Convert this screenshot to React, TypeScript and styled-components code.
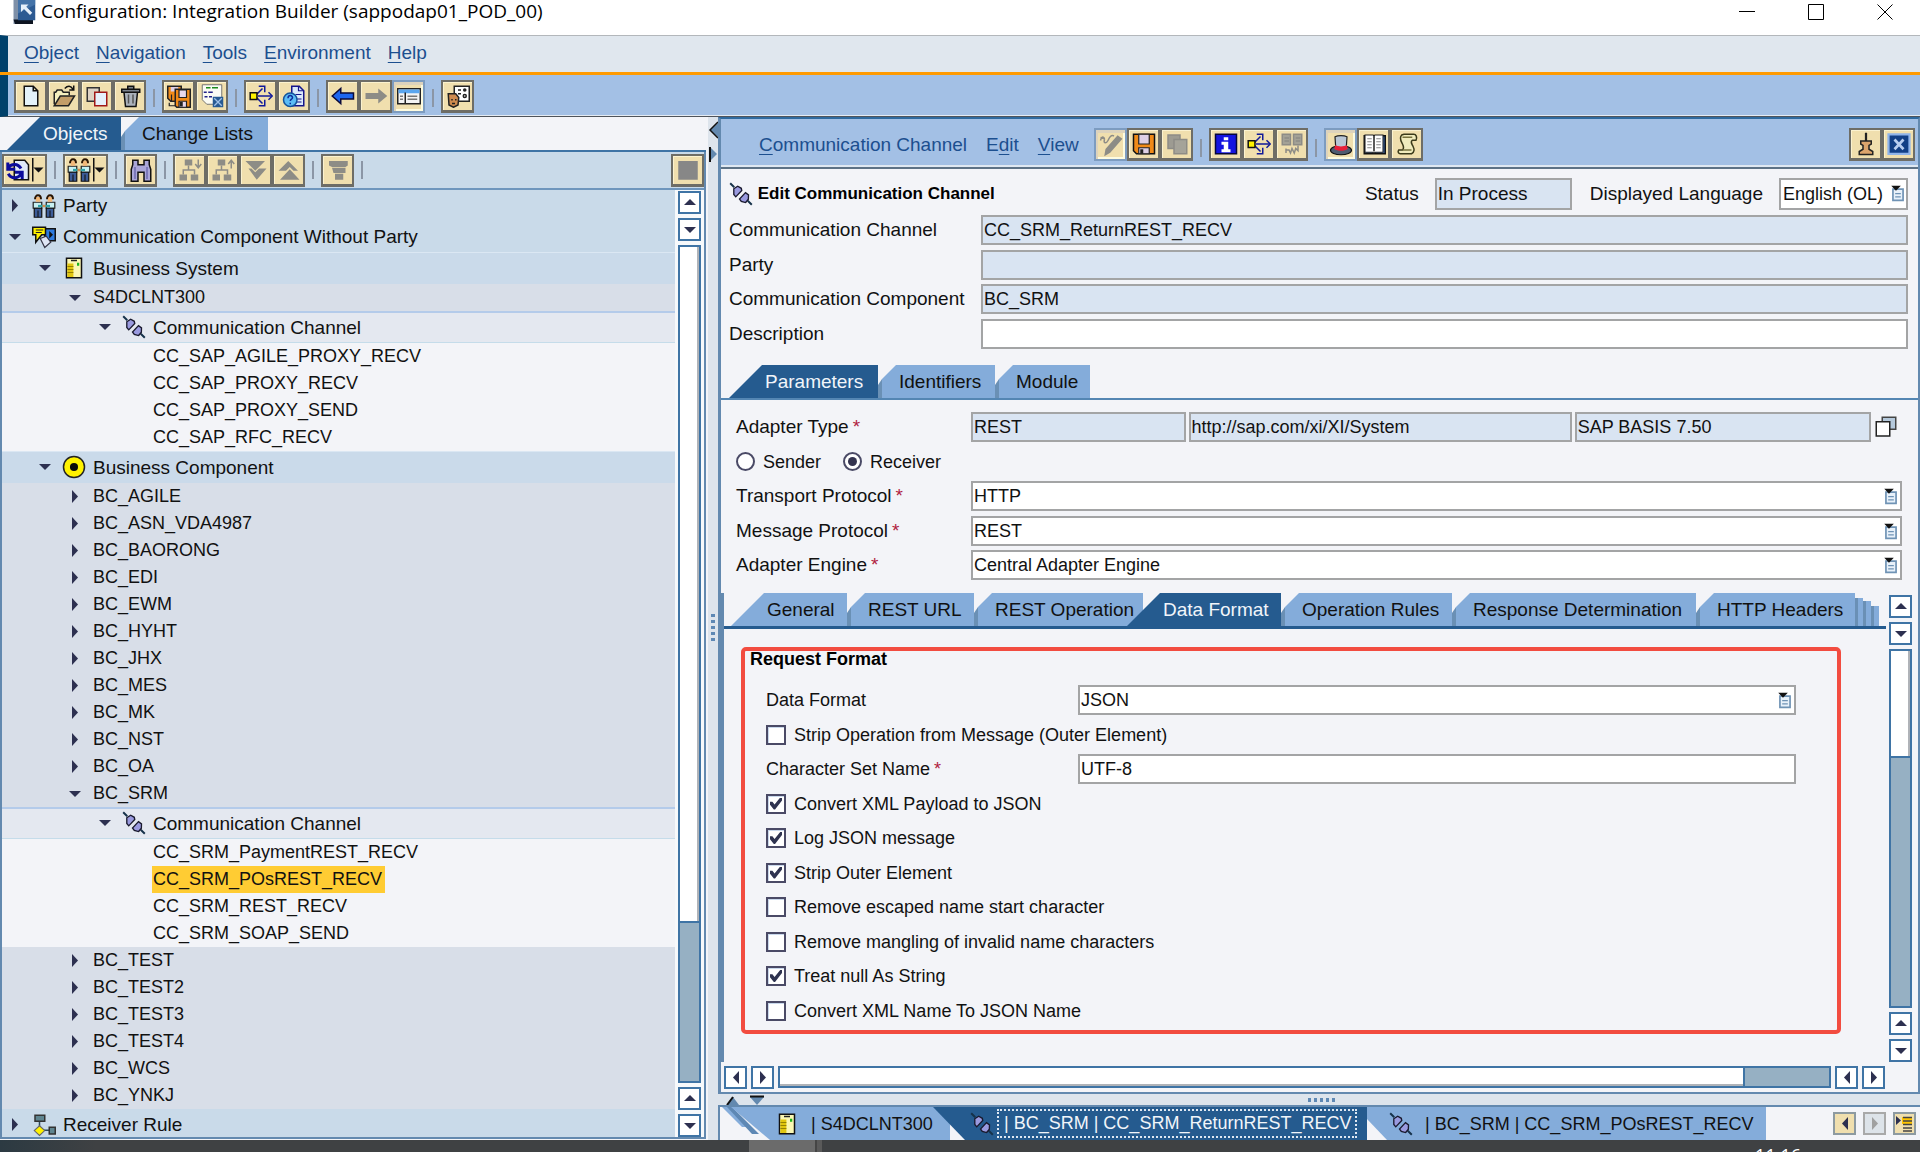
import React, { ReactNode } from "react";
import styled, { createGlobalStyle, css } from "styled-components";

const GlobalStyle = createGlobalStyle`
  *, *::before, *::after { box-sizing: border-box; }
  body {
    margin: 0;
    background: #f3f4f8;
    color: #111;
    font-family: "Liberation Sans", Arial, sans-serif;
    font-size: 19px;
    line-height: 22px;
    overflow: hidden;
  }
  button, input, select { font: inherit; color: inherit; margin: 0; border-radius: 0; }
  svg { display: block; flex: none; }
`;

/* ---------- Icons (16 unit grid) ---------- */

type IconName =
  | "new" | "open" | "copy" | "trash" | "saveAll" | "activate" | "where" | "help"
  | "back" | "forward" | "layout" | "user" | "refresh" | "people" | "find"
  | "expand" | "collapse" | "down" | "up" | "filter" | "stop" | "edit" | "save"
  | "copyOff" | "info" | "compare" | "hat" | "book" | "scroll" | "pin" | "close"
  | "component" | "server" | "plug" | "target" | "rule" | "windows" | "valueHelp" | "logo";

const GREY = "#8d8c86";

const drawings: Record<IconName, ReactNode> = {
  new: <path d="M3.5 1.5h6l3 3v10h-9zM9.500 1.500v3h3" fill="#e4f2fa" stroke="#111" />,
  open: (
    <>
      <path d="M1.500 13.500v-8h1l1-1.500h3l1 1.500h4v2" fill="#f6f0c0" stroke="#222" />
      <path d="M1.500 14.500l4-6.500h9.500l-4 6.500z" fill="#c39d68" stroke="#222" />
      <path d="M8.500 3c2-2 4-2 5.500.5M14.500 1v3h-3" fill="none" stroke="#111" />
    </>
  ),
  copy: (
    <>
      <path d="M1.500 2.500h8v9h-8z" fill="#ddd2c4" stroke="#333" />
      <path d="M6.500 5.500h8v9h-8z" fill="#e6f0fb" stroke="#a01818" />
    </>
  ),
  trash: (
    <>
      <path d="M4 5.500h9l-1 9.500H5z" fill="#aab1bb" stroke="#111" />
      <path d="M2.500 3.500h12v2h-12zM6.500 3.500v-2h4v2" fill="#7c838d" stroke="#111" />
      <path d="M7 7v6M10 7v6" stroke="#555" />
    </>
  ),
  saveAll: (
    <>
      <path d="M.5 1.500h9v10h-7l-2-2z" fill="#f08a18" stroke="#222" />
      <path d="M2.500 2h5v3h-5z" fill="#ded0e6" />
      <path d="M3 7v5M1.500 12.500v2h4" stroke="#222" strokeWidth=".8" />
      <path d="M5.500 3.500h10v12h-9l-1-1z" fill="#f08a18" stroke="#222" />
      <path d="M8 4h5v5H8zM8 11.500h5v4H8z" fill="#e7d8ec" stroke="#222" strokeWidth=".8" />
      <path d="M8.500 12h2v3h-2z" fill="#222" />
    </>
  ),
  activate: (
    <>
      <path d="M1.500.5h13v9l-4 4h-6l-3-3z" fill="#fbfbf4" stroke="#666" strokeWidth=".6" />
      <path d="M4 2.500h3M8 2.500h4" stroke="#1c8a1c" />
      <path d="M2.500 5.500h2M5.500 5.500h3M3 8.500h2M6 8.500h2" stroke="#222288" />
      <path d="M8.500 8.500h7v7h-7z" fill="#275a93" />
      <path d="M9.500 9.500l5 5M14.500 9.500l-5 5" stroke="#9fc0e8" strokeWidth=".9" />
    </>
  ),
  where: (
    <>
      <path d="M5 7l4-4M6 8h9M5 9l4 4" stroke="#111a9a" />
      <path d="M6.500 1.500h4v4M13 5.500l2.500 2.500-2.500 2.500M10.500 10.500v4h-4" fill="none" stroke="#111a9a" />
      <path d="M.8 5.800h4.500v4.500H.8z" fill="#fff200" stroke="#111" />
    </>
  ),
  help: (
    <>
      <path d="M6.500 1.500h5l3 3v10h-8z" fill="#dbe9fb" stroke="#15158c" />
      <path d="M11 1.500v3h3M9 7h4M10 10h3M10 12h3" fill="none" stroke="#15158c" strokeWidth=".8" />
      <circle cx="5.500" cy="10.500" r="4.500" fill="#5cbcf5" stroke="#14549c" />
      <path d="M4 9.500c0-2.400 3-2.200 3-.4 0 1-1.500 1-1.500 2.200M5.500 12.500v1" fill="none" stroke="#0d2b9c" />
    </>
  ),
  back: <path d="M.8 8l5.700-5v3H15v4H6.500v3z" fill="#1e66f0" stroke="#0b0b3a" />,
  forward: <path d="M15.500 8L9.500 3v3H1v4h8.500v3z" fill={GREY} />,
  layout: (
    <>
      <path d="M.5 2.500h15v10H.5z" fill="#f4f4f4" stroke="#222" />
      <path d="M1 3h14v2.500H1z" fill="#5aa6f0" />
      <path d="M5.500 5v7" stroke="#222" />
      <path d="M2 7.500h2M2 9.500h2M7 7.500h6.500M7 9.500h6.500" stroke="#777" />
    </>
  ),
  user: (
    <>
      <path d="M5.500 1.500h10v10h-10z" fill="#fff" stroke="#222" />
      <path d="M8 4h2M8 6.500h2" stroke="#222" />
      <circle cx="12.500" cy="4" r="1.200" fill="#222" />
      <circle cx="12.500" cy="8" r="1" stroke="#222" />
      <path d="M1.500 6.500h5l2 2.500-.5 5-3 1.500-3-1.500z" fill="#cf8b4f" stroke="#222" />
      <path d="M4 10v1M6.500 10v1M4 13h2" stroke="#222" />
    </>
  ),
  refresh: (
    <>
      <path d="M5.500 1.500h7l2.500 3v10H5.500z" fill="#dfe9f8" stroke="#111" />
      <path d="M10 7C8 3.500 3.500 3.500 1.500 6.500M1.200 3v4.500h5M1.500 10.500c2 3.500 6.500 3.500 8.500 0M10.800 14V9.500H6" fill="none" stroke="#0b0b9c" strokeWidth="2" />
    </>
  ),
  people: (
    <>
      <path d="M.8 5.500h5.700v4H.8zM9.500 5.500h5.700v4H9.500z" fill="#c8f0f2" stroke="#222" strokeWidth=".8" />
      <path d="M1.500 9.500h5v6h-5zM9.500 9.500h5v6h-5z" fill="#3c5c98" stroke="#111" strokeWidth=".8" />
      <path d="M2.500 2h3v3.200h-3zM10.500 2h3v3.200h-3z" fill="#f3b878" />
      <path d="M2 3.500c0-3.500 4-3.500 4 0M10 3.500c0-3.500 4-3.500 4 0" fill="none" stroke="#2a1400" strokeWidth="1.300" />
      <path d="M4 8h8" stroke="#2fa3a8" strokeWidth="1.500" />
      <path d="M7 8h2" stroke="#d98c4c" strokeWidth="1.500" />
      <path d="M4 11v4.500M12 11v4.500" stroke="#111" strokeWidth=".7" />
    </>
  ),
  find: (
    <>
      <path d="M2.500 1.500h3.500v3h4v-3h3.500v3l1 3v8h-4.500v-6h-4v6H1.500v-8l1-3z" fill="#aaa6d8" stroke="#111" />
      <path d="M4 6v8M12 6v8" stroke="#6f6bb0" />
    </>
  ),
  expand: (
    <>
      <path d="M4.500 1h5v4h-5zM1 11h5v4H1zM8.500 11h5v4h-5z" fill={GREY} />
      <path d="M7 5v3M3.500 11V8h7.500v3M13.500 1v5M11.500 4l2 2.500 2-2.500" fill="none" stroke={GREY} />
    </>
  ),
  collapse: (
    <>
      <path d="M4.500 1h5v4h-5zM1 11h5v4H1zM8.500 11h5v4h-5z" fill={GREY} />
      <path d="M7 5v3M3.500 11V8h7.500v3M13.500 7V2M11.500 4l2-2.500 2 2.500" fill="none" stroke={GREY} />
    </>
  ),
  down: <path d="M1 2h13L7.500 8.500zM3 7h2l2.500 2.500L10 7h5l-6.500 7.500z" fill={GREY} />,
  up: <path d="M1 8.500L7.500 2 14 8.500h-3L8.500 6 6 8.500zM2 14.500L8.500 7.500l6.500 7z" fill={GREY} />,
  filter: <path d="M2 2h12.500v3l-1.500 1H4L2 5zM4 6.500h9v3.500H5zM6 10.500h5.500v4H6z" fill={GREY} />,
  stop: <path d="M1.500 2h13v12.500h-13z" fill="#878787" />,
  edit: (
    <>
      <path d="M14.500 4l-7.500 8.500-2.500 1.500.5-3 7.500-8.500z" fill={GREY} stroke={GREY} strokeWidth="1.500" />
      <path d="M1 5c1-4 3-2 2.500 0S5 7 6 5s2-4 4-3M1 3l3 1" fill="none" stroke={GREY} />
    </>
  ),
  save: (
    <>
      <path d="M1 1.500h14v13H3l-2-2z" fill="#f08a18" stroke="#111" />
      <path d="M4.500 1.500h7V8h-7zM4.500 10.500h7v4h-7z" fill="#ded0e6" stroke="#222" strokeWidth=".8" />
      <path d="M5.500 11.500h2v3h-2z" fill="#222" />
    </>
  ),
  copyOff: (
    <>
      <path d="M2 2h8v9H2z" fill="#9d9b92" stroke={GREY} />
      <path d="M6 5h8.500v9.500H6z" fill="#a5a399" stroke={GREY} />
    </>
  ),
  info: (
    <>
      <path d="M1 1.500h14v13H1z" fill="#1414e0" stroke="#06063c" />
      <path d="M6.500 3.500h3v2h-3zM5 6.500h4.500v5H11v2H5v-2h1.500v-3H5z" fill="#fff" />
    </>
  ),
  compare: (
    <>
      <path d="M1.500 1.500h5.500v7H1.500zM9 1.500h5.500v7H9z" fill="#a3a196" stroke={GREY} />
      <path d="M3 4h3M3 6h3M10.500 4h3M10.500 6h3M4 12h2l1 2 1-3 1.500 3 1-3 1.500 1.500V9M4 11v3" fill="none" stroke={GREY} />
    </>
  ),
  hat: (
    <>
      <ellipse cx="8" cy="11.500" rx="7" ry="3" fill="#4d5b70" stroke="#111" strokeWidth=".8" />
      <path d="M4 2.500c2-1 6-1 8 0l-.5 7.500h-7z" fill="#b9c6d6" stroke="#222" strokeWidth=".8" />
      <path d="M4.200 8c2 1.300 5.600 1.300 7.600 0l.7 2.500c-2 1.800-7 1.800-9 0z" fill="#e8203a" />
    </>
  ),
  book: (
    <>
      <path d="M1.500 2.500h14v12h-14z" fill="#3b66a8" stroke="#111" />
      <path d="M2 2h5.500l.5 1 .5-1H14v11.500H9l-1 .5-1-.5H2z" fill="#fff" stroke="#222" strokeWidth=".7" />
      <path d="M8 3v10" stroke="#222" />
      <path d="M3.500 4.500h3M3.500 6.500h3M3.500 8.500h3M3.500 10.500h3M9.500 4.500h3M9.500 6.500h3M9.500 8.500h3M9.500 10.500h3" stroke="#888" strokeWidth=".8" />
    </>
  ),
  scroll: (
    <>
      <path d="M4.500 2C2.500 4 4 6 5 8s1 3 0 4H2.500c-1 1.500 0 2.500 1 2.500H11c2-1 2-3 1-5s-2-3-.5-4H14c1-2 0-4-1.500-4H6z" fill="#efebbd" stroke="#3a3a1a" />
      <path d="M5 3.500h6.500M5 12h6" stroke="#77733f" />
    </>
  ),
  pin: (
    <>
      <path d="M8 .5v6" stroke="#222" strokeWidth="1.500" />
      <path d="M4.500 6h7v2l-1.500 1v2.500l2.500 1.500v2h-9v-2L6 11.500V9L4.500 8z" fill="#dca46c" stroke="#222" />
    </>
  ),
  close: (
    <>
      <path d="M1 1.500h14v13H1z" fill="#123f86" stroke="#8fb4ea" strokeWidth="1.500" />
      <path d="M5 5l6 6.500M11 5l-6 6.500" stroke="#b7cdf0" strokeWidth="1.800" />
    </>
  ),
  component: (
    <>
      <path d="M8.500 2.500h7v8h-7z" fill="#2d7be0" stroke="#111" />
      <path d="M11.500 4l2.500 2.500-2.500 2.500z" fill="#111" />
      <path d="M5.500 9l3 6 4-3.500-3-4z" fill="#dfe6f5" stroke="#334" strokeWidth=".8" />
      <path d="M.5 1.500h8.500v5H6.500l-4 5v-5h-2z" fill="#fff200" stroke="#111" />
      <path d="M2.500 3.300h5M2.500 5h4" stroke="#222" strokeWidth=".7" />
    </>
  ),
  server: (
    <>
      <path d="M3 1.500h10v13H3z" fill="#fbf7b4" stroke="#111" />
      <path d="M3.600 5h4v9h-4z" fill="#e1c60f" />
      <path d="M3.600 7h4M3.600 9h4M3.600 11h4" stroke="#8d7a00" strokeWidth=".6" />
      <path d="M6 3h4" stroke="#222" />
      <path d="M10 4.500h1.500v2H10z" fill="#1db21d" />
    </>
  ),
  plug: (
    <>
      <path d="M.8.8l2.700 2.700M12.500 12.500l2.700 2.700" stroke="#16324a" strokeWidth="1.300" />
      <path d="M3.200 4.500l2.600-1.700 2.400 1.400.3 1.500-4 4.200-1.300-1.600z" fill="#9a9adf" stroke="#1a1a2e" strokeWidth=".9" />
      <path d="M12.900 11.500l-1.800 2.200-2.900-.7-1.200-1.700 4-4.200 2 1.500z" fill="#9a9adf" stroke="#1a1a2e" strokeWidth=".9" />
    </>
  ),
  target: (
    <>
      <circle cx="8" cy="8" r="7" fill="#fff200" stroke="#222" />
      <circle cx="8" cy="8" r="2.700" fill="#0a0a0a" />
    </>
  ),
  rule: (
    <>
      <path d="M5 5v6M5 11.500h8" stroke="#2c4a5c" />
      <path d="M2 1.500h6.500v4H2zM11.500 9.500h4v4.500h-4z" fill="#5f8590" stroke="#333" />
      <path d="M5 8.500l3.500 3.200L5 15l-3.500-3.300z" fill="#fff200" stroke="#666" strokeWidth=".7" />
    </>
  ),
  windows: (
    <>
      <path d="M5.500 1.500h9v8h-9z" fill="#b5c9dc" stroke="#444" />
      <path d="M1.500 4.500h9v9.500h-9z" fill="#fff" stroke="#222" />
    </>
  ),
  valueHelp: (
    <>
      <path d="M3.500 4.500h9v10h-9z" fill="#e8f1fa" stroke="#6f93b5" strokeWidth="1.500" />
      <path d="M5.500 8.500h5M5.500 11.500h5" stroke="#6f93b5" strokeWidth="1.200" />
      <path d="M2 1.500h8.500L6.200 6z" fill="#111" />
    </>
  ),
  logo: (
    <>
      <path d="M1 0h4v16H1z" fill="#7e90a8" />
      <path d="M1 13h13v3H2z" fill="#0d1420" />
      <path d="M4 0h11.500v13.500H4z" fill="#2c5a92" />
      <path d="M4 0h11.500v3L4 9z" fill="#5583b8" opacity=".6" />
      <path d="M6 3h5l-1.500 1.500 4 4-1.500 1.500-4-4L6 8z" fill="#e6f0fa" />
    </>
  ),
};

const Icon = ({ name, size = 24 }: { name: IconName; size?: number }) => (
  <svg width={size} height={size} viewBox="0 0 16 16" fill="none" aria-hidden="true">
    {drawings[name]}
  </svg>
);

/* ---------- Window chrome ---------- */

const Window = styled.div`
  height: 100vh;
  display: flex;
  flex-direction: column;
  overflow: hidden;
`;

const TitleBar = styled.header`
  height: 35px;
  flex: none;
  display: flex;
  align-items: flex-start;
  justify-content: space-between;
  padding-left: 12px;
  background: #fff;
`;

const WindowTitle = styled.h1`
  margin: 0;
  display: flex;
  gap: 5px;
  font: 400 19px/22px "Open Sans", "Noto Sans", sans-serif;
  color: #000;
`;

const WindowControls = styled.div`
  display: flex;
  padding-right: 1px;
`;

const WindowButton = styled.button`
  width: 69px;
  height: 24px;
  padding: 0;
  border: 0;
  background: none;
  display: grid;
  place-items: center;
`;

const MenuBar = styled.nav`
  height: 37px;
  flex: none;
  display: flex;
  align-items: center;
  gap: 17px;
  padding: 0 0 2px 16px;
  border-top: 1px solid #b3b7bb;
  border-left: 8px solid #00416b;
  background: #e0e7ee;
`;

const MenuItem = styled.button`
  padding: 0;
  border: 0;
  background: none;
  color: #1c4f8f;
  u { text-underline-offset: 3px; }
`;

const AccentLine = styled.div`
  height: 3px;
  flex: none;
  background: #ff9a00;
`;

const MainToolbar = styled.div`
  height: 42px;
  flex: none;
  display: flex;
  align-items: flex-start;
  padding: 5px 6px 0;
  border-left: 8px solid #00416b;
  border-bottom: 1px solid #4f545b;
  background: #a3c0e5;
  box-shadow: inset 0 -1px #e4ebf3;
`;

const ToolButton = styled.button<{ $pressed?: boolean; $wide?: boolean }>`
  width: ${(p) => (p.$wide ? 45 : 33)}px;
  height: 33px;
  flex: none;
  padding: 0;
  display: flex;
  align-items: center;
  justify-content: center;
  gap: 2px;
  background: #f0dfae;
  border: 2px solid #6e6d66;
  border-bottom-width: 3px;
  box-shadow: inset 1px 1px #fbf2cf;
  ${(p) =>
    p.$pressed &&
    css`
      border: 2px solid #7d9cc0;
      box-shadow: inset 2px 3px #ddd3bd, inset -2px -2px #fdfbe0;
    `}
`;

const Separator = styled.span`
  width: 16px;
  height: 18px;
  flex: none;
  align-self: center;
  background: linear-gradient(#8b96a6, #8b96a6) 7px 0 / 2px 100% no-repeat;
`;

const DropMark = styled.span`
  width: 12px;
  height: 24px;
  background: #111;
  clip-path: polygon(0 0, 2px 0, 2px 10px, 12px 10px, 7px 15px, 2px 10px, 2px 100%, 0 100%);
`;

const Panes = styled.div`
  flex: 1;
  min-height: 0;
  display: grid;
  grid-template-columns: 708px 10px minmax(0, 1fr);
`;

const Splitter = styled.div`
  background: #dde4ec;
  display: flex;
  flex-direction: column;
  align-items: center;
  justify-content: space-between;
  padding-bottom: 50px;
`;

const Grip = styled.span<{ $across?: boolean }>`
  width: ${(p) => (p.$across ? 30 : 4)}px;
  height: ${(p) => (p.$across ? 4 : 30)}px;
  background: repeating-linear-gradient(
    ${(p) => (p.$across ? "90deg" : "180deg")},
    #5e88b4 0 3px,
    transparent 3px 6px
  );
`;

/* ---------- Tabs ---------- */

const TabStrip = styled.div<{ $indent: number; $line: string }>`
  height: 35px;
  flex: none;
  display: flex;
  padding: 0 0 0 ${(p) => p.$indent}px;
  border-bottom: 2px solid ${(p) => p.$line};
`;

const ParameterTabs = styled(TabStrip)`
  margin-top: 12px;
`;

const SubTabs = styled(TabStrip)`
  height: 36px;
  border-bottom-width: 3px;
`;

const Tab = styled.button<{ $w: number; $active?: boolean; $slant?: boolean; $over?: boolean }>`
  width: ${(p) => p.$w}px;
  flex: none;
  border: 0;
  padding: 0 0 0 ${(p) => (p.$slant ? 36 : 21)}px;
  text-align: left;
  white-space: nowrap;
  color: ${(p) => (p.$active ? "#f1f5fa" : "#111")};
  background: ${(p) =>
    p.$active ? "#255b8f" : p.$slant ? "#84acda" : "linear-gradient(90deg, #6a90b5 4px, #84acda 4px)"};
  clip-path: ${(p) =>
    p.$slant
      ? "polygon(33px 0, 100% 0, 100% 100%, 0 100%)"
      : "polygon(0 20px, 4px 14px, 18px 0, 100% 0, 100% 100%, 0 100%)"};
  margin-left: ${(p) => (p.$over ? -16 : 0)}px;
  z-index: ${(p) => (p.$over ? 1 : 0)};
`;

const StackedTab = styled.span<{ $h: number }>`
  width: 8px;
  height: ${(p) => p.$h}px;
  flex: none;
  align-self: flex-end;
  background: linear-gradient(90deg, #6a90b5 3px, #84acda 3px);
`;

/* ---------- Scroll bars ---------- */

const ScrollColumn = styled.div`
  width: 23px;
  flex: none;
  display: flex;
  flex-direction: column;
  gap: 4px;
`;

const ScrollLine = styled.div`
  height: 22px;
  flex: none;
  display: flex;
  gap: 4px;
`;

const ScrollButton = styled.button`
  width: 23px;
  height: 23px;
  flex: none;
  padding: 0;
  border: 2px solid #3f74a5;
  background: #fff;
  display: grid;
  place-items: center;
`;

const Track = styled.div<{ $row?: boolean }>`
  flex: 1;
  min-width: 0;
  min-height: 0;
  display: flex;
  flex-direction: ${(p) => (p.$row ? "row" : "column")};
  border: 2px solid #3f74a5;
  background: #96b0c3;
`;

const Thumb = styled.div<{ $share: number; $row?: boolean }>`
  flex: 0 0 ${(p) => p.$share}%;
  background: #fff;
  ${(p) =>
    p.$row
      ? css`border-right: 2px solid #3f74a5; box-shadow: inset 0 -2px #b0b3b8;`
      : css`border-bottom: 2px solid #3f74a5; box-shadow: inset -2px 0 #b0b3b8;`}
`;

type Direction = "up" | "down" | "left" | "right";

const arrowPaths: Record<Direction, string> = {
  up: "M1 9h12L7 3z",
  down: "M1 4h12L7 10z",
  left: "M10 0v13L4 6.500z",
  right: "M4 0v13l6-6.500z",
};

const Arrow = ({ dir, fill = "#2d3050", size = 14 }: { dir: Direction; fill?: string; size?: number }) => (
  <svg width={size} height={size} viewBox="0 0 14 14" aria-hidden="true">
    <path d={arrowPaths[dir]} fill={fill} />
  </svg>
);

const ArrowButton = ({ dir }: { dir: Direction }) => (
  <ScrollButton aria-label={`Scroll ${dir}`}>
    <Arrow dir={dir} />
  </ScrollButton>
);

const VerticalScroll = ({ share }: { share: number }) => (
  <ScrollColumn>
    <ArrowButton dir="up" />
    <ArrowButton dir="down" />
    <Track>
      <Thumb $share={share} />
    </Track>
    <ArrowButton dir="up" />
    <ArrowButton dir="down" />
  </ScrollColumn>
);

/* ---------- Object tree ---------- */

const LeftPane = styled.section`
  display: flex;
  flex-direction: column;
  min-height: 0;
  padding-right: 2px;
`;

const TreeFrame = styled.div`
  flex: 1;
  min-height: 0;
  display: flex;
  flex-direction: column;
  border: solid #6389af;
  border-width: 0 2px 2px 2px;
  margin-bottom: 1px;
`;

const TreeToolbar = styled.div`
  height: 38px;
  flex: none;
  display: flex;
  align-items: center;
  border-bottom: 2px solid #6f96bd;
  background: #c9dae9;
`;

const Spacer = styled.span`
  flex: 1;
`;

const TreeBody = styled.div`
  flex: 1;
  min-height: 0;
  display: flex;
  gap: 3px;
  padding: 1px 3px 0 0;
  background: #f7f9fb;
`;

const TreeList = styled.ul`
  flex: 1;
  min-width: 0;
  margin: -1px 0 0;
  padding: 0;
  list-style: none;
  overflow: hidden;
  background: #c9dae9;
`;

type Band = "root" | "group" | "item" | "channel" | "leaf";

const bandColor: Record<Band, string> = {
  root: "#c9dae9",
  group: "#cadaea",
  item: "#d8dee8",
  channel: "#e4e8f0",
  leaf: "#f3f4f8",
};

const bandLine: Partial<Record<Band, string>> = {
  group: "inset 0 1px #dbe7f3",
  channel: "inset 0 2px #b4cbea, inset 0 -1px #c5dcea",
};

const bandHeight: Record<Band, number> = { root: 31, group: 32, item: 27, channel: 32, leaf: 27 };

const TreeRow = styled.li<{ $band: Band; $level: number }>`
  height: ${(p) => bandHeight[p.$band]}px;
  display: flex;
  align-items: center;
  padding-left: ${(p) => p.$level * 30}px;
  white-space: nowrap;
  background: ${(p) => bandColor[p.$band]};
  box-shadow: ${(p) => bandLine[p.$band] ?? "none"};
  font-size: ${(p) => (p.$band === "item" || p.$band === "leaf" ? 18 : 19)}px;
`;

const Toggle = styled.button`
  width: 30px;
  height: 24px;
  flex: none;
  padding: 0 0 0 6px;
  border: 0;
  background: none;
  display: flex;
  align-items: center;
`;

const TreeIcon = styled.span`
  width: 30px;
  flex: none;
`;

const TreeLabel = styled.span<{ $marked?: boolean }>`
  line-height: 27px;
  padding: 0 3px 0 1px;
  background: ${(p) => (p.$marked ? "#ffcc33" : "transparent")};
`;

type Node = { label: string; level: number; band: Band; open?: boolean; icon?: IconName; marked?: boolean };

const item = (label: string, open = false): Node => ({ label, level: 2, band: "item", open });
const leaf = (label: string, marked = false): Node => ({ label, level: 4, band: "leaf", marked });
const channel: Node = { label: "Communication Channel", level: 3, band: "channel", open: true, icon: "plug" };

const nodes: Node[] = [
  { label: "Party", level: 0, band: "root", open: false, icon: "people" },
  { label: "Communication Component Without Party", level: 0, band: "root", open: true, icon: "component" },
  { label: "Business System", level: 1, band: "group", open: true, icon: "server" },
  item("S4DCLNT300", true),
  channel,
  ...["CC_SAP_AGILE_PROXY_RECV", "CC_SAP_PROXY_RECV", "CC_SAP_PROXY_SEND", "CC_SAP_RFC_RECV"].map((l) => leaf(l)),
  { label: "Business Component", level: 1, band: "group", open: true, icon: "target" },
  ...[
    "BC_AGILE", "BC_ASN_VDA4987", "BC_BAORONG", "BC_EDI", "BC_EWM", "BC_HYHT",
    "BC_JHX", "BC_MES", "BC_MK", "BC_NST", "BC_OA",
  ].map((l) => item(l)),
  item("BC_SRM", true),
  channel,
  leaf("CC_SRM_PaymentREST_RECV"),
  leaf("CC_SRM_POsREST_RECV", true),
  leaf("CC_SRM_REST_RECV"),
  leaf("CC_SRM_SOAP_SEND"),
  ...["BC_TEST", "BC_TEST2", "BC_TEST3", "BC_TEST4", "BC_WCS", "BC_YNKJ"].map((l) => item(l)),
  { label: "Receiver Rule", level: 0, band: "root", open: false, icon: "rule" },
];

const ObjectTree = () => (
  <TreeList>
    {nodes.map((n, i) => (
      <TreeRow key={i} $band={n.band} $level={n.level}>
        {n.band !== "leaf" && (
          <Toggle aria-label={n.open ? "Collapse" : "Expand"}>
            <Arrow dir={n.open ? "down" : "right"} />
          </Toggle>
        )}
        {n.icon && (
          <TreeIcon>
            <Icon name={n.icon} />
          </TreeIcon>
        )}
        {n.band === "leaf" && <TreeIcon />}
        <TreeLabel $marked={n.marked}>{n.label}</TreeLabel>
      </TreeRow>
    ))}
  </TreeList>
);

/* ---------- Editor pane ---------- */

const RightPane = styled.section`
  display: flex;
  flex-direction: column;
  min-width: 0;
  min-height: 0;
`;

const Editor = styled.div`
  flex: 1;
  min-height: 0;
  display: flex;
  flex-direction: column;
  border: solid #6389af;
  border-width: 2px 2px 2px 3px;
  border-top-color: #2f6a9f;
`;

const EditorToolbar = styled.div`
  height: 50px;
  flex: none;
  display: flex;
  align-items: flex-start;
  padding: 9px 3px 0 38px;
  background: #a3c0e5;
  border-bottom: 2px solid #5d7286;
  box-shadow: inset 0 -2px #dfe8f2;
`;

const EditorMenu = styled.nav`
  display: flex;
  gap: 19px;
  width: 335px;
  height: 33px;
  align-items: center;
`;

const EditorHead = styled.div`
  display: flex;
  align-items: center;
  padding: 9px 10px 0 8px;
  height: 41px;
  flex: none;
`;

const Heading = styled.h2<{ $size: number }>`
  margin: 0;
  font-size: ${(p) => p.$size}px;
  line-height: 22px;
  font-weight: 700;
  color: #000;
`;

const HeadLabel = styled.label`
  margin: 0 16px 0 18px;
`;

const fieldLook = css`
  width: 100%;
  min-width: 0;
  height: 30px;
  padding: 0 1px;
  border: 2px solid #a3a4a5;
  outline: 0;
  background: #fff;
  font-size: 18px;
`;

const Input = styled.input`
  ${fieldLook}
  &:read-only { background: #d9e4f2; }
`;

const StatusInput = styled(Input)`
  width: 137px;
  height: 32px;
  font-size: 19px;
  flex: none;
`;

const SelectBox = styled.span<{ $compact?: boolean }>`
  position: relative;
  display: flex;
  align-items: center;
  flex: none;
  min-width: 0;
  ${(p) => p.$compact && css`width: 129px;`}

  select {
    ${fieldLook}
    appearance: none;
    ${(p) => p.$compact && css`height: 32px; padding-left: 2px;`}
  }
  svg {
    position: absolute;
    right: ${(p) => (p.$compact ? 1 : 2)}px;
    top: 6px;
    pointer-events: none;
  }
`;

const Select = ({ id, value, compact }: { id: string; value: string; compact?: boolean }) => (
  <SelectBox $compact={compact}>
    <select id={id} defaultValue={value}>
      <option>{value}</option>
    </select>
    <Icon name="valueHelp" size={18} />
  </SelectBox>
);

const FormGrid = styled.div<{ $label: number; $height: number; $pad: string }>`
  display: grid;
  grid-template-columns: ${(p) => p.$label}px minmax(0, 1fr);
  grid-auto-rows: 1fr;
  flex: none;
  min-height: ${(p) => p.$height}px;
  padding: ${(p) => p.$pad};
  > * { height: 30px; }
`;

const Label = styled.label`
  display: flex;
  align-items: center;
  gap: 4px;
  white-space: nowrap;
`;

const Star = styled.span`
  color: #b01c40;
`;

const Required = () => <Star>*</Star>;

const AdapterLine = styled.div`
  display: grid;
  grid-template-columns: 215fr 384fr 297fr 24px;
  gap: 3px;
  align-items: center;
  padding-right: 4px;
`;

const IconButton = styled.button`
  padding: 0;
  border: 0;
  background: none;
`;

const ChoiceRow = styled.div`
  grid-column: 1 / -1;
  display: flex;
  align-items: center;
  gap: 22px;
  font-size: 18px;
`;

const Choice = styled.label`
  display: flex;
  align-items: center;
  gap: 8px;
  white-space: nowrap;
`;

const Radio = styled.input`
  appearance: none;
  width: 19px;
  height: 19px;
  border: 2px solid #4a4a66;
  border-radius: 50%;
  background: #fff;
  display: grid;
  place-items: center;
  &:checked::after {
    content: "";
    width: 9px;
    height: 9px;
    border-radius: 50%;
    background: #33334f;
  }
`;

const Checkbox = styled.input`
  appearance: none;
  width: 20px;
  height: 20px;
  border: 2px solid #4a4a66;
  background: #fff;
  box-shadow: inset 1px 1px #c9d8ec;
  display: grid;
  place-items: center;
  &:checked::after {
    content: "";
    width: 12px;
    height: 12px;
    background: #2f3350;
    clip-path: polygon(0 35%, 20% 35%, 38% 58%, 85% 0, 100% 0, 100% 25%, 42% 100%, 32% 100%, 0 60%);
  }
`;

const SubArea = styled.div`
  flex: 1;
  min-height: 0;
  margin-top: 8px;
  display: flex;
  gap: 3px;
  padding: 0 6px 0 0;
`;

const ScrollSlot = styled.div`
  display: flex;
  padding-top: 2px;
`;

const SubPane = styled.div`
  flex: 1;
  min-width: 0;
  border-left: 3px solid #6389af;
`;

const MarkedFrame = styled.section`
  margin: 18px 45px 0 17px;
  border: 4px solid #f24c40;
  border-radius: 5px;
  font-size: 18px;
  h2 { padding-left: 5px; line-height: 16px; margin-bottom: 18px; }
`;

const CrossScroll = styled.div`
  flex: none;
  padding: 4px 33px 4px 3px;
`;

const BottomSplitter = styled.div`
  height: 13px;
  flex: none;
  display: flex;
  align-items: center;
  justify-content: center;
  background: #dde4ec;
  border-bottom: 2px solid #6389af;
`;

const SplitterArrows = styled.span`
  flex: 1;
  display: flex;
  gap: 10px;
  padding-left: 8px;
`;

const OpenTabs = styled.div`
  height: 33px;
  flex: none;
  display: flex;
  align-items: center;
  padding-right: 4px;
  border-left: 2px solid #6389af;
`;

const OpenTab = styled.button<{ $w: number; $shape: string; $active?: boolean; $pad: number }>`
  width: ${(p) => p.$w}px;
  height: 33px;
  flex: none;
  display: flex;
  align-items: center;
  gap: ${(p) => (p.$active ? 3 : 12)}px;
  padding: 0 0 0 ${(p) => p.$pad}px;
  border: 0;
  font-size: 18px;
  white-space: pre;
  background: ${(p) => (p.$active ? "#255b8f" : "#84acda")};
  color: ${(p) => (p.$active ? "#f1f5fa" : "#111")};
  clip-path: ${(p) => p.$shape};
  margin-left: ${(p) => (p.$active ? -17 : 0)}px;
`;

const FocusedText = styled.span`
  height: 29px;
  line-height: 25px;
  width: 360px;
  padding-left: 5px;
  text-align: left;
  border: 2px dotted #dfe8f2;
`;

const PagerButton = styled.button`
  width: 23px;
  height: 23px;
  flex: none;
  margin-left: 7px;
  padding: 0;
  display: grid;
  place-items: center;
  border: 2px solid #8d9aa0;
  background: #f0dfae;
  &:disabled { background: #dde3e9; border-color: #a9a9a9; }
`;

const Taskbar = styled.footer`
  height: 12px;
  flex: none;
  overflow: hidden;
  display: flex;
  align-items: flex-start;
  padding-left: 749px;
  background: linear-gradient(90deg, #2c3a42, #3f4143 5%);
`;

const TaskItem = styled.span`
  width: 73px;
  height: 12px;
  background: linear-gradient(90deg, #6b6b6b 66px, #454545 66px 68px, #5a5a5a 68px);
`;

const Clock = styled.time`
  margin: 4px 119px 0 auto;
  color: #fff;
  font: 400 18px/22px "Open Sans", "Noto Sans", sans-serif;
`;

const MenuLabel = ({ text, at = 0 }: { text: string; at?: number }) => (
  <MenuItem>
    {text.slice(0, at)}
    <u>{text[at]}</u>
    {text.slice(at + 1)}
  </MenuItem>
);

const ToolGroup = ({ icons, pressed }: { icons: IconName[]; pressed?: IconName }) => (
  <>
    {icons.map((name) => (
      <ToolButton key={name} aria-label={name} $pressed={pressed === name}>
        <Icon name={name} />
      </ToolButton>
    ))}
  </>
);

const Check = ({ label, on }: { label: string; on?: boolean }) => (
  <ChoiceRow>
    <Choice>
      <Checkbox type="checkbox" defaultChecked={on} />
      {label}
    </Choice>
  </ChoiceRow>
);

export default function App() {
  return (
    <>
      <GlobalStyle />
      <Window>
        <TitleBar>
          <WindowTitle>
            <Icon name="logo" />
            Configuration: Integration Builder (sappodap01_POD_00)
          </WindowTitle>
          <WindowControls>
            <WindowButton aria-label="Minimize">
              <svg width="16" height="16" viewBox="0 0 16 16" stroke="#000"><path d="M0 7.500h16" /></svg>
            </WindowButton>
            <WindowButton aria-label="Maximize">
              <svg width="16" height="16" viewBox="0 0 16 16" fill="none" stroke="#000"><path d="M.5.5h15v15H.5z" /></svg>
            </WindowButton>
            <WindowButton aria-label="Close">
              <svg width="16" height="16" viewBox="0 0 16 16" stroke="#000"><path d="M.5.5l15 15M15.500.5l-15 15" /></svg>
            </WindowButton>
          </WindowControls>
        </TitleBar>
        <MenuBar>
          {["Object", "Navigation", "Tools", "Environment", "Help"].map((m) => (
            <MenuLabel key={m} text={m} />
          ))}
        </MenuBar>
        <AccentLine />
        <MainToolbar>
          <ToolGroup icons={["new", "open", "copy", "trash"]} />
          <Separator />
          <ToolGroup icons={["saveAll", "activate"]} />
          <Separator />
          <ToolGroup icons={["where", "help"]} />
          <Separator />
          <ToolGroup icons={["back", "forward", "layout"]} pressed="layout" />
          <Separator />
          <ToolGroup icons={["user"]} />
        </MainToolbar>

        <Panes>
          <LeftPane>
            <TabStrip $indent={7} $line="#3f74a5">
              <Tab $w={114} $active $slant>Objects</Tab>
              <Tab $w={147}>Change Lists</Tab>
            </TabStrip>
            <TreeFrame>
              <TreeToolbar>
                <ToolButton $wide aria-label="Refresh"><Icon name="refresh" /><DropMark /></ToolButton>
                <Separator />
                <ToolButton $wide aria-label="Party"><Icon name="people" /><DropMark /></ToolButton>
                <Separator />
                <ToolGroup icons={["find"]} />
                <Separator />
                <ToolGroup icons={["expand", "collapse", "down", "up"]} />
                <Separator />
                <ToolGroup icons={["filter"]} />
                <Separator />
                <Spacer />
                <ToolGroup icons={["stop"]} />
              </TreeToolbar>
              <TreeBody>
                <ObjectTree />
                <VerticalScroll share={81} />
              </TreeBody>
            </TreeFrame>
          </LeftPane>

          <Splitter>
            <svg width="10" height="50" viewBox="0 0 10 50" aria-hidden="true">
              <path d="M10 6v14L2 13z" fill="#6389af" />
              <path d="M10 5L2 13l8 8" fill="none" stroke="#111" strokeWidth="1.500" />
              <path d="M2 30v14l7-7z" fill="#6389af" />
              <path d="M2 30v15" stroke="#111" strokeWidth="2" />
            </svg>
            <Grip />
            <span />
          </Splitter>

          <RightPane>
            <Editor>
              <EditorToolbar>
                <EditorMenu>
                  <MenuLabel text="Communication Channel" />
                  <MenuLabel text="Edit" at={1} />
                  <MenuLabel text="View" />
                </EditorMenu>
                <ToolGroup icons={["edit", "save", "copyOff"]} pressed="edit" />
                <Separator />
                <ToolGroup icons={["info", "where", "compare"]} />
                <Separator />
                <ToolGroup icons={["hat", "book", "scroll"]} pressed="hat" />
                <Spacer />
                <ToolGroup icons={["pin", "close"]} />
              </EditorToolbar>

              <EditorHead>
                <Icon name="plug" />
                <Heading $size={17}>&nbsp;Edit Communication Channel</Heading>
                <Spacer />
                <HeadLabel htmlFor="status">Status</HeadLabel>
                <StatusInput id="status" readOnly value="In Process" />
                <HeadLabel htmlFor="lang">Displayed Language</HeadLabel>
                <Select id="lang" value="English (OL)" compact />
              </EditorHead>

              <FormGrid $label={252} $height={143} $pad="5px 10px 0 8px">
                <Label htmlFor="channel">Communication Channel</Label>
                <Input id="channel" readOnly value="CC_SRM_ReturnREST_RECV" />
                <Label htmlFor="party">Party</Label>
                <Input id="party" readOnly value="" />
                <Label htmlFor="component">Communication Component</Label>
                <Input id="component" readOnly value="BC_SRM" />
                <Label htmlFor="description">Description</Label>
                <Input id="description" defaultValue="" />
              </FormGrid>

              <ParameterTabs $indent={8} $line="#5486b3">
                <Tab $w={149} $active $slant>Parameters</Tab>
                <Tab $w={117}>Identifiers</Tab>
                <Tab $w={95}>Module</Tab>
              </ParameterTabs>

              <FormGrid $label={235} $height={185} $pad="12px 16px 0 15px">
                <Label htmlFor="adapter">Adapter Type <Required /></Label>
                <AdapterLine>
                  <Input id="adapter" readOnly value="REST" />
                  <Input aria-label="Adapter namespace" readOnly value="http://sap.com/xi/XI/System" />
                  <Input aria-label="Adapter component" readOnly value="SAP BASIS 7.50" />
                  <IconButton aria-label="Select adapter"><Icon name="windows" /></IconButton>
                </AdapterLine>
                <ChoiceRow>
                  <Choice><Radio type="radio" name="direction" />Sender</Choice>
                  <Choice><Radio type="radio" name="direction" defaultChecked />Receiver</Choice>
                </ChoiceRow>
                <Label htmlFor="transport">Transport Protocol <Required /></Label>
                <Select id="transport" value="HTTP" />
                <Label htmlFor="message">Message Protocol <Required /></Label>
                <Select id="message" value="REST" />
                <Label htmlFor="engine">Adapter Engine <Required /></Label>
                <Select id="engine" value="Central Adapter Engine" />
              </FormGrid>

              <SubArea>
                <SubPane>
                  <SubTabs $indent={7} $line="#255b8f">
                    <Tab $w={116} $slant>General</Tab>
                    <Tab $w={127}>REST URL</Tab>
                    <Tab $w={169}>REST Operation</Tab>
                    <Tab $w={154} $active $slant $over>Data Format</Tab>
                    <Tab $w={171}>Operation Rules</Tab>
                    <Tab $w={244}>Response Determination</Tab>
                    <Tab $w={159}>HTTP Headers</Tab>
                    <StackedTab $h={28} />
                    <StackedTab $h={25} />
                    <StackedTab $h={20} />
                  </SubTabs>
                  <MarkedFrame>
                    <Heading $size={18}>Request Format</Heading>
                    <FormGrid $label={312} $height={345} $pad="0 41px 0 21px">
                      <Label htmlFor="format">Data Format</Label>
                      <Select id="format" value="JSON" />
                      <Check label="Strip Operation from Message (Outer Element)" />
                      <Label htmlFor="charset">Character Set Name <Required /></Label>
                      <Input id="charset" defaultValue="UTF-8" />
                      <Check label="Convert XML Payload to JSON" on />
                      <Check label="Log JSON message" on />
                      <Check label="Strip Outer Element" on />
                      <Check label="Remove escaped name start character" />
                      <Check label="Remove mangling of invalid name characters" />
                      <Check label="Treat null As String" on />
                      <Check label="Convert XML Name To JSON Name" />
                    </FormGrid>
                  </MarkedFrame>
                </SubPane>
                <ScrollSlot>
                  <VerticalScroll share={30} />
                </ScrollSlot>
              </SubArea>

              <CrossScroll>
                <ScrollLine>
                  <ArrowButton dir="left" />
                  <ArrowButton dir="right" />
                  <Track $row>
                    <Thumb $share={92} $row />
                  </Track>
                  <ArrowButton dir="left" />
                  <ArrowButton dir="right" />
                </ScrollLine>
              </CrossScroll>
            </Editor>

            <BottomSplitter>
              <SplitterArrows>
                <svg width="14" height="10" viewBox="0 0 14 10"><path d="M1 10l6-8 6 8z" fill="#6389af" /><path d="M1 10l6-8" stroke="#111" strokeWidth="2" /></svg>
                <svg width="14" height="10" viewBox="0 0 14 10"><path d="M0 2h14l-7 8z" fill="#6389af" /><path d="M0 1.500h14" stroke="#111" strokeWidth="2" /></svg>
              </SplitterArrows>
              <Grip $across />
              <Spacer />
            </BottomSplitter>

            <OpenTabs>
              <svg width="11" height="33" viewBox="0 0 11 33" overflow="visible" aria-hidden="true">
                <path d="M2 0h9l20 20h-9z" fill="#84acda" />
                <path d="M7 0h5l27 27h-7z" fill="#5e88b4" />
              </svg>
              <OpenTab $w={219} $pad={44} $shape="polygon(0 0, 100% 0, 100% 100%, 39px 100%)">
                <Icon name="server" />| S4DCLNT300
              </OpenTab>
              <OpenTab $w={434} $pad={37} $active $shape="polygon(0 0, 100% 0, 100% 100%, 32px 100%)">
                <Icon name="plug" />
                <FocusedText>| BC_SRM | CC_SRM_ReturnREST_RECV</FocusedText>
              </OpenTab>
              <OpenTab $w={399} $pad={22} $shape="polygon(0 0, 100% 0, 100% 100%, 20px 100%, 0 12px)">
                <Icon name="plug" />| BC_SRM | CC_SRM_POsREST_RECV
              </OpenTab>
              <Spacer />
              <PagerButton aria-label="Previous tab"><Arrow dir="left" /></PagerButton>
              <PagerButton aria-label="Next tab" disabled><Arrow dir="right" fill="#a0a0a0" /></PagerButton>
              <PagerButton aria-label="Tab list">
                <svg width="19" height="19" viewBox="0 0 19 19" aria-hidden="true">
                  <path d="M7 3h10v7H7z" fill="#ffc400" />
                  <path d="M1 2v9l5-4.500z" fill="#2d3050" />
                  <path d="M8 3.500h9M8 7h9M8 10.500h9M8 14h9M8 17h9" stroke="#444" strokeWidth="1.500" />
                </svg>
              </PagerButton>
            </OpenTabs>
          </RightPane>
        </Panes>

        <Taskbar>
          <TaskItem />
          <Clock>11:16</Clock>
        </Taskbar>
      </Window>
    </>
  );
}
